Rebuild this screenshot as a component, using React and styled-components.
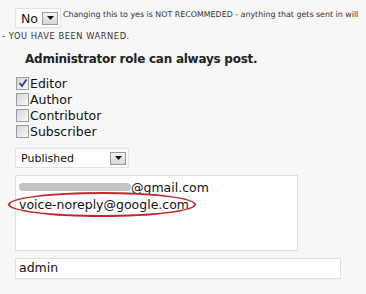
import React from 'react'
import { styled, createGlobalStyle } from 'styled-components'

const Global = createGlobalStyle`
    html, body {
        margin: 0;
        padding: 0;
        background: #f7f7f7;
    }
    body {
        font-family: 'DejaVu Sans', Verdana, sans-serif;
        color: #111;
        width: 366px;
        height: 294px;
        overflow: hidden;
    }
`;

const Page = styled.div`
    display: flex;
    flex-direction: column;
    padding: 8px 0 0 0;
`;

const WarnRow = styled.div`
    display: flex;
    align-items: flex-start;
    padding-left: 15px;
    white-space: nowrap;
    gap: 2px;
`;

const Note = styled.span`
    font-size: ${p => p.$size || 8}px;
    color: #333;
    padding-top: ${p => p.$top || 2}px;
    padding-left: ${p => p.$indent || 0}px;
    letter-spacing: ${p => p.$spread || 0}px;
`;

const Select = styled.div`
    display: flex;
    align-items: center;
    justify-content: space-between;
    width: ${p => p.$width}px;
    height: 20px;
    box-sizing: border-box;
    background: #fff;
    border: 1px solid #e2e2e2;
    padding: 0 2px 0 5px;
    font-size: ${p => p.$size}px;
    color: #111;
`;

const Arrow = styled.span`
    display: flex;
    align-items: center;
    justify-content: center;
    width: 16px;
    height: 13px;
    border: 1px solid #9a9a9a;
    background: linear-gradient(#f4f4f4, #d8d8d8);
    box-sizing: border-box;
`;

const Heading = styled.div`
    font-weight: bold;
    font-size: 12px;
    letter-spacing: -0.25px;
    margin: 11px 0 9px 25px;
    color: #222;
`;

const Checks = styled.div`
    display: flex;
    flex-direction: column;
    padding-left: 16px;
`;

const CheckRow = styled.label`
    display: flex;
    align-items: center;
    height: 16px;
    font-size: 12.5px;
    color: #111;
`;

const Box = styled.span`
    width: 13px;
    height: 13px;
    box-sizing: border-box;
    border: 1px solid #9c9c9c;
    background: linear-gradient(135deg, #d4d4d4, #fafafa);
    margin-right: 1px;
    display: flex;
    align-items: center;
    justify-content: center;
`;

const Field = styled.div`
    margin: ${p => p.$mt}px 0 0 15px;
`;

const Area = styled.div`
    width: 283px;
    height: 76px;
    box-sizing: border-box;
    background: #fff;
    border: 1px solid #dedede;
    padding: 3px 0 0 3px;
    font-size: 12.5px;
    line-height: 17px;
`;

const Blurred = styled.span`
    display: inline-block;
    width: 112px;
    height: 8px;
    border-radius: 4px;
    background: #c4c4c4;
    vertical-align: 1px;
`;

const Circled = styled.span`
    position: relative;
    display: inline-block;
`;

const Ring = styled.span`
    position: absolute;
    left: -11px;
    top: -4px;
    width: 188px;
    height: 25px;
    border: 2.5px solid #c0262a;
    border-radius: 50%;
    box-sizing: border-box;
`;

const Input = styled.div`
    width: 326px;
    height: 21px;
    box-sizing: border-box;
    background: #fff;
    border: 1px solid #e0e0e0;
    padding: 1px 0 0 3px;
    font-size: 12.5px;
`;

function DropArrow() {
    return (
        <Arrow>
            <svg width="7" height="4" viewBox="0 0 7 4"><path d="M0 0h7L3.5 4z" fill="#111" /></svg>
        </Arrow>
    );
}

function Check({ checked, label }) {
    return (
        <CheckRow>
            <Box>
                {checked && (
                    <svg width="10" height="10" viewBox="0 0 10 10">
                        <path d="M1.5 5l2.5 3L8.5 1.5" stroke="#2a3f8c" strokeWidth="1.8" fill="none" />
                    </svg>
                )}
            </Box>
            {label}
        </CheckRow>
    );
}

export default function App() {
    return (
        <>
            <Global />
            <Page>
                <WarnRow>
                    <Select $width={46} $size={12.5}>No <DropArrow /></Select>
                    <Note $size={7.9}>Changing this to yes is NOT RECOMMEDED - anything that gets sent in will</Note>
                </WarnRow>
                <Note $size={8.3} $indent={2} $top={3} $spread={0.55}>- YOU HAVE BEEN WARNED.</Note>
                <Heading>Administrator role can always post.</Heading>
                <Checks>
                    <Check checked label="Editor" />
                    <Check label="Author" />
                    <Check label="Contributor" />
                    <Check label="Subscriber" />
                </Checks>
                <Field $mt={9}>
                    <Select $width={114} $size={11}>Published <DropArrow /></Select>
                </Field>
                <Field $mt={7}>
                    <Area>
                        <div><Blurred />@gmail.com</div>
                        <div><Circled><Ring />voice-noreply@google.com</Circled></div>
                    </Area>
                </Field>
                <Field $mt={7}>
                    <Input>admin</Input>
                </Field>
            </Page>
        </>
    )
}
